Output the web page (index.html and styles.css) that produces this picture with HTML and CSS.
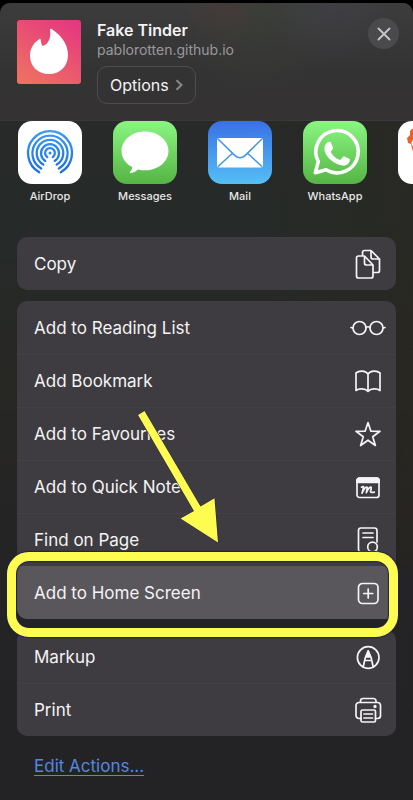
FILE: index.html
```html
<!DOCTYPE html>
<html lang="en">
<head>
<meta charset="utf-8">
<meta name="viewport" content="width=device-width, initial-scale=1">
<title>Share</title>
<link rel="stylesheet" href="styles.css">
</head>
<body>
<main class="sheet">
  <header class="header">
    <svg class="site-icon" viewBox="0 0 64 64" aria-hidden="true">
      <defs>
        <linearGradient id="flame-bg" x1="0.8" y1="0" x2="0.2" y2="1"><stop offset="0" stop-color="#e5397f"/><stop offset="1" stop-color="#ee7062"/></linearGradient>
      </defs>
      <rect width="64" height="64" rx="3" fill="url(#flame-bg)"/>
      <path d="M33.500 9c.4-.3.8-.1 1.100.1C43 14.500 51 23.500 51 35c0 11.500-8 19-19 19s-19-7.500-19-18.500C13 28 17 22.500 22.500 19c.6-.3 1.100-.1 1.200.6.200 2.500.6 4.900 2 6.500 7-2.500 8.300-9.500 7.300-16.300 0-.4.200-.7.500-.8z" fill="#fff"/>
    </svg>
    <div class="site">
      <h1 class="site-title">Fake Tinder</h1>
      <p class="site-host">pablorotten.github.io</p>
      <button class="options" type="button">Options
        <svg class="chevron" viewBox="0 0 8 12" aria-hidden="true"><path d="M1.500 1.200L6.500 6l-5 4.800"/></svg>
      </button>
    </div>
    <button class="close" type="button" aria-label="Close">
      <svg class="close-icon" viewBox="0 0 14 14" aria-hidden="true"><path d="M1.500 1.500l11 11m0-11l-11 11"/></svg>
    </button>
  </header>

  <nav class="apps" aria-label="Share with">
    <a class="app" href="#">
      <svg class="tile" viewBox="0 0 64 63" aria-hidden="true">
        <defs><linearGradient id="drop" gradientUnits="userSpaceOnUse" x1="0" y1="9" x2="0" y2="54"><stop offset="0" stop-color="#3d9df0"/><stop offset="1" stop-color="#186be6"/></linearGradient></defs>
        <rect width="64" height="63" rx="14" fill="#fff"/>
        <g fill="none" stroke="url(#drop)" stroke-width="2.300" stroke-linecap="round">
          <path d="M21.200 51.200a22 22 0 1 1 21.600 0"/>
          <path d="M23.200 47.500a17.600 17.600 0 1 1 17.600 0"/>
          <path d="M25.300 43.600a13.300 13.300 0 1 1 13.400 0"/>
          <path d="M27.300 39.900a9 9 0 1 1 9.400 0"/>
          <path d="M29.300 36.100a4.900 4.900 0 1 1 5.400 0"/>
        </g>
        <circle cx="32" cy="32" r="1.500" fill="#2b83eb"/>
      </svg>
      <span class="app-name">AirDrop</span>
    </a>
    <a class="app" href="#">
      <svg class="tile" viewBox="0 0 64 63" aria-hidden="true">
        <defs><linearGradient id="green" x1="0" y1="0" x2="0" y2="1"><stop offset="0" stop-color="#8af681"/><stop offset="1" stop-color="#55b544"/></linearGradient></defs>
        <rect width="64" height="63" rx="14" fill="url(#green)"/>
        <path d="M32 10.500c13 0 23.500 8.700 23.500 19.400S45 49.300 32 49.300c-2.500 0-4.800-.3-7-.9-2 1.900-4.700 3.300-7.500 3.500-.7 0-.9-.6-.4-1.100 1.600-1.500 2.100-3 2.100-4.700-6.500-3.400-10.700-9.400-10.700-16.200C8.500 19.200 19 10.500 32 10.500z" fill="#fff"/>
      </svg>
      <span class="app-name">Messages</span>
    </a>
    <a class="app" href="#">
      <svg class="tile" viewBox="0 0 64 63" aria-hidden="true">
        <defs><linearGradient id="sky" x1="0" y1="0" x2="0" y2="1"><stop offset="0" stop-color="#3a70e4"/><stop offset="1" stop-color="#54bff5"/></linearGradient></defs>
        <rect width="64" height="63" rx="14" fill="url(#sky)"/>
        <rect x="9" y="17" width="46" height="29.500" rx="2.500" fill="#fff"/>
        <path d="M10 18l17 16.600c3 2.700 7 2.700 10 0L54 18M10 45.500l14.500-13.200M54 45.500L39.500 32.300" fill="none" stroke="#4394e8" stroke-width="1.500"/>
      </svg>
      <span class="app-name">Mail</span>
    </a>
    <a class="app" href="#">
      <svg class="tile" viewBox="0 0 64 63" aria-hidden="true">
        <rect width="64" height="63" rx="14" fill="url(#green)"/>
        <path d="M12.300 51.700l3-11.100A21.200 21.200 0 1 1 23 48.800z" fill="none" stroke="#fff" stroke-width="3.600" stroke-linejoin="round"/>
        <path d="M26.300 20.800c.9 0 1.400.2 1.800 1.200l1.900 4.500c.3.800 0 1.500-1.800 3.500-.4.500-.4.900-.1 1.400 2 3.500 4.700 5.800 8.300 7.300.6.300 1 .2 1.400-.3l2-2.500c.5-.6 1-.7 1.700-.4l4.700 2.200c.7.400.8.700.7 1.400-.4 4-4 5.900-7 5.500-8.700-1.200-16.100-7.600-18.200-14.400-1-4 .7-8.900 4.600-9.400z" fill="#fff"/>
      </svg>
      <span class="app-name">WhatsApp</span>
    </a>
    <a class="app" href="#" aria-label="More">
      <svg class="tile" viewBox="0 0 64 63" aria-hidden="true">
        <rect width="64" height="63" rx="14" fill="#fff"/>
        <path d="M12 10q2-3 6-3h28q6 1 8 8l-1 6-8 30H20L13 23l-3-1-1-5 3-3z" fill="#e8622c"/>
        <circle cx="17" cy="22" r="3.500" fill="#fff"/>
      </svg>
    </a>
  </nav>

  <div class="actions">
    <ul class="card">
      <li class="item"><button class="row" type="button">Copy
        <svg class="icon" viewBox="0 0 36 32" aria-hidden="true"><path d="M12.500 7.500V4.500a2 2 0 0 1 2-2H21l8.500 8.500v11.500a2 2 0 0 1-2 2H24.500M21 2.500V9a2 2 0 0 0 2 2h6.500M14.500 8H8.500a2 2 0 0 0-2 2v18a2 2 0 0 0 2 2h12.500a2 2 0 0 0 2-2V17l-8.500-9zM14.500 8v7a2 2 0 0 0 2 2H23"/></svg></button></li>
    </ul>
    <ul class="card">
      <li class="item"><button class="row" type="button">Add to Reading List
        <svg class="icon" viewBox="0 0 36 32" aria-hidden="true"><circle cx="9.500" cy="16" r="6.500"/><circle cx="26.500" cy="16" r="6.500"/><path d="M3 16L1 15.500M33 16l2-.5M15.800 15.500q2.200-1.500 4.400 0"/></svg></button></li>
      <li class="item"><button class="row" type="button">Add Bookmark
        <svg class="icon" viewBox="0 0 36 32" aria-hidden="true"><path d="M18 9C15.500 5.500 9 5.300 6 8v17.500c3-2.300 9-2.100 12 .8 3-2.900 9-3.100 12-.8V8c-3-2.700-9.500-2.500-12 1zV26"/></svg></button></li>
      <li class="item"><button class="row" type="button">Add to Favourites
        <svg class="icon" viewBox="0 0 36 32" aria-hidden="true"><path d="M18 4.500l2.900 8.700 9.100.1-7.300 5.500 2.700 8.700-7.400-5.300-7.400 5.300 2.700-8.700L6 13.300l9.100-.1z"/></svg></button></li>
      <li class="item"><button class="row" type="button">Add to Quick Note
        <svg class="icon" viewBox="0 0 36 32" aria-hidden="true"><rect x="7" y="7" width="22" height="19.500" rx="2.500"/><path d="M7 9.500A2.500 2.500 0 0 1 9.500 7h17A2.500 2.500 0 0 1 29 9.500v2H7z" fill="currentColor"/><path d="M11.500 16.200q2-1.200 2.200-.3L12 22.200q2.500-5.500 4.600-6.200 1 0 .5 2l-.8 3.700q2-4.700 4.200-5.700 1.200 0 .6 2l-.6 2.300q-.2 1.600 3.800.8"/></svg></button></li>
      <li class="item"><button class="row" type="button">Find on Page
        <svg class="icon" viewBox="0 0 36 32" aria-hidden="true"><path d="M18 28h-7a2.500 2.500 0 0 1-2.500-2.500v-19A2.500 2.500 0 0 1 11 4h13.500A2.500 2.500 0 0 1 27 6.500V18M13 9h10M13 13.500h10"/><circle cx="22.500" cy="23" r="4.800"/><path d="M26 26.500l3.500 3.500"/></svg></button></li>
      <li class="item item-marked"><button class="row row-active" type="button">Add to Home Screen
        <svg class="icon" viewBox="0 0 36 32" aria-hidden="true"><rect x="8.500" y="6.500" width="19.500" height="20" rx="4"/><path d="M18.200 12v9M13.700 16.500h9"/></svg></button>
        <span class="ring"></span>
        <svg class="arrow" viewBox="0 0 84 134" aria-hidden="true"><path d="M3 6l6.500-4L65.500 97.500l14-8.200L83 133.500 45.500 109.500l13.500-7.500z"/></svg>
      </li>
    </ul>
    <ul class="card">
      <li class="item"><button class="row" type="button">Markup
        <svg class="icon" viewBox="0 0 36 32" aria-hidden="true"><circle cx="18.200" cy="16.500" r="10.800"/><path d="M13.200 26l2-9 3-7 3 7 2 9M14.600 19.500h7.200"/><path d="M15.800 16l2.400-6 2.400 6z" fill="currentColor"/></svg></button></li>
      <li class="item"><button class="row" type="button">Print
        <svg class="icon" viewBox="0 0 36 32" aria-hidden="true"><path d="M10.500 8.500V7a2.500 2.500 0 0 1 2.500-2.500h10.500A2.500 2.500 0 0 1 26 7v1.500M11 24.500H9A3 3 0 0 1 6 21.500v-10a3 3 0 0 1 3-3h18.500a3 3 0 0 1 3 3v10a3 3 0 0 1-3 3h-2"/><rect x="11" y="16" width="14.500" height="12" rx="1.500"/><path d="M14 20h8.500M14 24h8.500"/><circle cx="25" cy="12.500" r=".8"/></svg></button></li>
    </ul>
    <a class="edit" href="#">Edit Actions...</a>
  </div>
</main>
</body>
</html>
```

FILE: styles.css
```css
* {
  box-sizing: border-box;
}

body {
  margin: 0;
  background: #000;
  color: #f4f3f5;
  font-family: Inter, "Liberation Sans", sans-serif;
  font-size: 17px;
}

h1,
p,
ul {
  margin: 0;
  padding: 0;
}

button {
  font: inherit;
  color: inherit;
  border: 0;
  background: none;
  cursor: pointer;
}

.sheet {
  min-height: calc(100vh - 3px);
  margin-top: 3px;
  border-radius: 10px 10px 0 0;
  overflow: hidden;
  background:
    linear-gradient(90deg, transparent 60%, rgba(44, 38, 26, 0.3)) 0 0 / 100% 560px no-repeat,
    linear-gradient(180deg, #282a29 0, #262a28 240px, #272724 380px, #242325 580px, #232224 100%);
}

.header {
  display: flex;
  align-items: flex-start;
  gap: 16px;
  height: 118px;
  padding: 17px 14px 0 17px;
  border-bottom: 1px solid #3a393a;
  background:
    radial-gradient(circle at 225px 0, rgba(80, 56, 54, 0.4), transparent 40px),
    radial-gradient(circle at 258px 20px, rgba(56, 64, 50, 0.4), transparent 75px),
    radial-gradient(circle at 325px 0, rgba(66, 66, 76, 0.5), transparent 60px),
    linear-gradient(180deg, #3d3c3d, #343334 60%, #343233);
}

.site-icon {
  flex: none;
  width: 64px;
  height: 64px;
}

.site {
  flex: 1;
  min-width: 0;
}

.site-title {
  font-size: 16px;
  font-weight: 600;
  line-height: 20px;
}

.site-host {
  color: #9a999c;
  font-size: 14px;
  line-height: 20px;
}

.options {
  display: flex;
  align-items: center;
  gap: 6px;
  height: 38px;
  margin-top: 6px;
  padding: 0 12px;
  border: 1px solid #4d4c4f;
  border-radius: 10px;
  font-size: 16px;
}

.chevron {
  width: 8px;
  height: 12px;
  fill: none;
  stroke: #88878a;
  stroke-width: 2;
}

.close {
  display: grid;
  place-items: center;
  width: 31px;
  height: 31px;
  margin-top: -2px;
  padding: 0;
  border-radius: 50%;
  background: #4a494b;
}

.close-icon {
  width: 14px;
  height: 14px;
  fill: none;
  stroke: #c3c2c6;
  stroke-width: 2;
  stroke-linecap: round;
}

.apps {
  display: flex;
  gap: 31px;
  height: 116px;
  padding-left: 18px;
  overflow: hidden;
}

.app {
  display: flex;
  flex: none;
  flex-direction: column;
  align-items: center;
  gap: 4px;
  width: 64px;
  color: #e6e6e6;
  text-decoration: none;
}

.tile {
  width: 64px;
  height: 63px;
}

.app-name {
  font-size: 11px;
  font-weight: 500;
  line-height: 16px;
}

.actions {
  display: flex;
  flex-direction: column;
  gap: 11px;
  padding: 0 17px;
}

.card {
  list-style: none;
  border-radius: 10px;
  background: #3e3c40;
}

.item + .item {
  box-shadow: inset 0 1px #434145;
}

.row {
  display: flex;
  align-items: center;
  justify-content: space-between;
  width: 100%;
  height: 53px;
  padding: 0 10px 0 17px;
  text-align: left;
}

.row-active {
  border-radius: 0 0 10px 10px;
  background: #59575b;
}

.icon {
  flex: none;
  width: 36px;
  height: 32px;
  fill: none;
  stroke: currentColor;
  stroke-width: 1.7;
  stroke-linecap: round;
  stroke-linejoin: round;
}

.item-marked {
  position: relative;
  z-index: 1;
}

.ring {
  position: absolute;
  inset: -14px -2px -18px -10px;
  border: 9px solid #fefc50;
  border-radius: 22px;
  box-shadow: 0 0 1px 1px #22214a, inset 0 0 1px 1px #22214a;
  pointer-events: none;
}

.arrow {
  position: absolute;
  left: 118px;
  bottom: 76px;
  width: 84px;
  height: 134px;
  fill: #fefc50;
  stroke: #22214a;
  stroke-width: 1;
  paint-order: stroke;
  pointer-events: none;
}

.edit {
  align-self: flex-start;
  margin: 7px 0 0 17px;
  color: #5687e0;
  line-height: 24px;
  text-underline-offset: 3px;
}
```
